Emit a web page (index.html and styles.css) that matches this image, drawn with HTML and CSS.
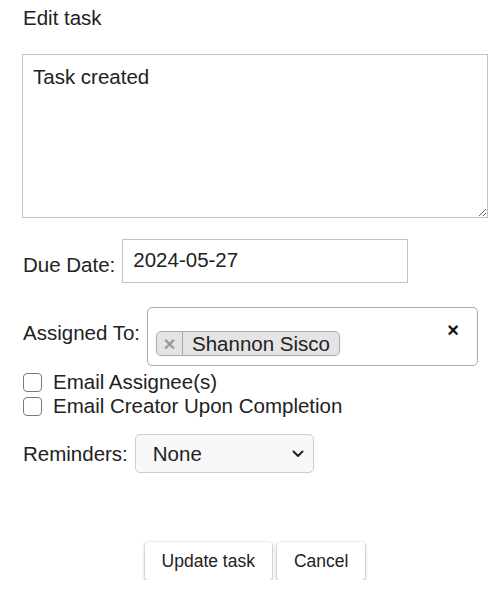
FILE: index.html
```html
<!DOCTYPE html>
<html lang="en">
<head>
  <meta charset="UTF-8" />
  <title>Edit task</title>
  <link rel="stylesheet" href="styles.css">
</head>
<body>
  <div class="page">
    <div class="title">Edit task</div>

    <textarea class="desc" name="description">Task created</textarea>

    <div class="row due">
      <label for="due">Due Date:</label>
      <input type="text" id="due" class="date" value="2024-05-27" />
    </div>

    <!-- Assignee picker -->
    <div class="row assigned">
      <label>Assigned To:</label>
      <div class="picker">
        <span class="tag"><span class="tag-remove">×</span><span class="tag-text">Shannon Sisco</span></span>
        <span class="clear">×</span>
      </div>
    </div>

    <div class="checks">
      <label class="check"><input type="checkbox" /> Email Assignee(s)</label>
      <label class="check"><input type="checkbox" /> Email Creator Upon Completion</label>
    </div>

    <div class="row reminders">
      <label for="reminders">Reminders:</label>
      <div class="select-wrap">
        <select id="reminders" class="select">
          <option>None</option>
          <option>1 day before</option>
          <option>1 week before</option>
        </select>
        <svg class="chevron" width="12" height="8" viewBox="0 0 12 8">
          <path d="M1.5 1.5 L6 6 L10.5 1.5" fill="none" stroke="#222" stroke-width="2" stroke-linecap="round" stroke-linejoin="round"/>
        </svg>
      </div>
    </div>

    <div class="actions">
      <button type="submit" class="btn">Update task</button>
      <button type="button" class="btn">Cancel</button>
    </div>
  </div>
</body>
</html>
```

FILE: styles.css
```css
body {
  margin: 0;
  font-family: "Liberation Sans", Arial, sans-serif;
  font-size: 20.5px;
  color: #222;
  background: #fff;
}
.page {
  width: 466px;
  padding: 6px 0 0 22px;
}
.title {
  line-height: 23px;
  padding-left: 1px;
}
.desc {
  display: block;
  box-sizing: border-box;
  width: 466px;
  height: 164px;
  margin: 25px 0 0;
  padding: 10px;
  border: 1px solid #c2c2c2;
  font-family: inherit;
  font-size: 20.5px;
  line-height: 23px;
  color: #222;
  resize: vertical;
}
.row {
  display: flex;
  gap: 7px;
  padding-left: 1px;
}
.row label {
  line-height: 23px;
}
.due {
  margin-top: 21px;
  align-items: flex-start;
}
.due label {
  margin-top: 14px;
}
.date {
  box-sizing: border-box;
  width: 286px;
  height: 44px;
  margin: 0;
  padding: 0 10px 3px;
  border: 1px solid #c2c2c2;
  font-family: inherit;
  font-size: 20.5px;
  color: #222;
}
.assigned {
  margin-top: 24px;
  align-items: flex-start;
}
.assigned label {
  margin-top: 14px;
}
/* select2 style picker */
.picker {
  position: relative;
  box-sizing: border-box;
  width: 331px;
  height: 59px;
  padding: 23px 8px 0;
  border: 1px solid #aaa;
  border-radius: 5px;
  background: #fff;
}
.tag {
  display: inline-flex;
  border: 1px solid #aaa;
  border-radius: 5px;
  background: #e4e4e4;
  line-height: 23px;
}
.tag-remove {
  width: 25px;
  border-right: 1px solid #aaa;
  text-align: center;
  font-weight: bold;
  color: #999;
}
.tag-text {
  padding: 0 9px 0 9px;
}
.clear {
  position: absolute;
  top: 11px;
  right: 18px;
  font-weight: bold;
  font-size: 20px;
  color: #111;
}
.checks {
  margin-top: 4px;
  padding-left: 1px;
}
.check {
  display: flex;
  align-items: center;
  line-height: 24px;
}
.check input {
  appearance: none;
  -webkit-appearance: none;
  box-sizing: border-box;
  width: 19px;
  height: 19px;
  margin: 0 11px 0 0;
  border: 1px solid #7a7a7a;
  border-radius: 4px;
  background: #fff;
}
.reminders {
  margin-top: 16px;
  align-items: baseline;
}
.select-wrap {
  position: relative;
}
.select {
  appearance: none;
  -webkit-appearance: none;
  box-sizing: border-box;
  width: 179px;
  height: 39px;
  padding: 0 30px 0 17px;
  border: 1px solid #ccc;
  border-radius: 5px;
  background: #f8f8f8;
  font-family: inherit;
  font-size: 20.5px;
  color: #222;
}
.chevron {
  position: absolute;
  right: 10px;
  top: 16px;
  pointer-events: none;
}
.actions {
  display: flex;
  justify-content: center;
  gap: 5px;
  margin-top: 69px;
}
.btn {
  height: 38px;
  padding: 0 17px;
  border: none;
  border-radius: 3px;
  background: #fff;
  box-shadow: 0 1px 3px rgba(0, 0, 0, 0.45);
  font-family: inherit;
  font-size: 17.5px;
  color: #222;
}
```
